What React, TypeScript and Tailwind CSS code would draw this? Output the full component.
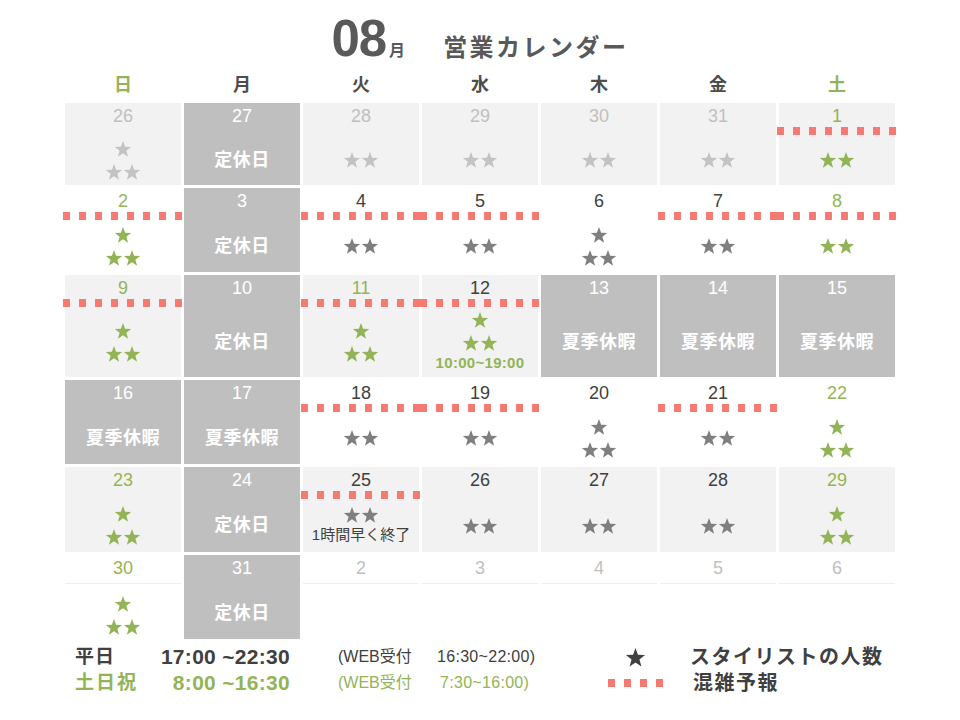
import React from 'react';

type Tone = 'muted' | 'dark' | 'green';

interface Day {
  n: string;
  num: Tone;
  bg: 'light' | 'white';
  dots?: boolean;
  stars?: 0 | 2 | 3;
  star?: 'light' | 'dark' | 'green';
  label?: string; // closed day
  note?: string;
  noteGreen?: boolean;
  line?: boolean;
}

const weekHeights = ['h-[82px]', 'h-[84px]', 'h-[102px]', 'h-[84px]', 'h-[85px]', 'h-[84px]'];

const numColor: Record<Tone, string> = {
  muted: 'text-[#c0c0c0]',
  dark: 'text-[#404040]',
  green: 'text-[#92b456]',
};

const starColor = {
  light: 'text-[#c3c3c3]',
  dark: 'text-[#7f7f7f]',
  green: 'text-[#92b456]',
};

const closed = (n: string, label = '定休日'): Day => ({ n, num: 'dark', bg: 'white', label });

const weeks: Day[][] = [
  [
    { n: '26', num: 'muted', bg: 'light', stars: 3, star: 'light' },
    closed('27'),
    { n: '28', num: 'muted', bg: 'light', stars: 2, star: 'light' },
    { n: '29', num: 'muted', bg: 'light', stars: 2, star: 'light' },
    { n: '30', num: 'muted', bg: 'light', stars: 2, star: 'light' },
    { n: '31', num: 'muted', bg: 'light', stars: 2, star: 'light' },
    { n: '1', num: 'green', bg: 'light', dots: true, stars: 2, star: 'green' },
  ],
  [
    { n: '2', num: 'green', bg: 'white', dots: true, stars: 3, star: 'green' },
    closed('3'),
    { n: '4', num: 'dark', bg: 'white', dots: true, stars: 2, star: 'dark' },
    { n: '5', num: 'dark', bg: 'white', dots: true, stars: 2, star: 'dark' },
    { n: '6', num: 'dark', bg: 'white', stars: 3, star: 'dark' },
    { n: '7', num: 'dark', bg: 'white', dots: true, stars: 2, star: 'dark' },
    { n: '8', num: 'green', bg: 'white', dots: true, stars: 2, star: 'green' },
  ],
  [
    { n: '9', num: 'green', bg: 'light', dots: true, stars: 3, star: 'green' },
    closed('10'),
    { n: '11', num: 'green', bg: 'light', dots: true, stars: 3, star: 'green' },
    { n: '12', num: 'dark', bg: 'light', dots: true, stars: 3, star: 'green', note: '10:00~19:00', noteGreen: true },
    closed('13', '夏季休暇'),
    closed('14', '夏季休暇'),
    closed('15', '夏季休暇'),
  ],
  [
    closed('16', '夏季休暇'),
    closed('17', '夏季休暇'),
    { n: '18', num: 'dark', bg: 'white', dots: true, stars: 2, star: 'dark' },
    { n: '19', num: 'dark', bg: 'white', dots: true, stars: 2, star: 'dark' },
    { n: '20', num: 'dark', bg: 'white', stars: 3, star: 'dark' },
    { n: '21', num: 'dark', bg: 'white', dots: true, stars: 2, star: 'dark' },
    { n: '22', num: 'green', bg: 'white', stars: 3, star: 'green' },
  ],
  [
    { n: '23', num: 'green', bg: 'light', stars: 3, star: 'green' },
    closed('24'),
    { n: '25', num: 'dark', bg: 'light', dots: true, stars: 2, star: 'dark', note: '1時間早く終了' },
    { n: '26', num: 'dark', bg: 'light', stars: 2, star: 'dark' },
    { n: '27', num: 'dark', bg: 'light', stars: 2, star: 'dark' },
    { n: '28', num: 'dark', bg: 'light', stars: 2, star: 'dark' },
    { n: '29', num: 'green', bg: 'light', stars: 3, star: 'green' },
  ],
  [
    { n: '30', num: 'green', bg: 'white', stars: 3, star: 'green', line: true },
    closed('31'),
    { n: '2', num: 'muted', bg: 'white', line: true },
    { n: '3', num: 'muted', bg: 'white', line: true },
    { n: '4', num: 'muted', bg: 'white', line: true },
    { n: '5', num: 'muted', bg: 'white', line: true },
    { n: '6', num: 'muted', bg: 'white', line: true },
  ],
];

const dotted = 'bg-[repeating-linear-gradient(90deg,#f57b72_0_7px,transparent_7px_16px)]';

function Star({ size = 18 }: { size?: number }) {
  return (
    <svg width={size} height={size} viewBox="0 0 24 24" fill="currentColor">
      <polygon points="12,1.2 14.8,8.9 22.9,9.2 16.5,14.3 18.8,22.2 12,17.6 5.2,22.2 7.5,14.3 1.1,9.2 9.2,8.9" />
    </svg>
  );
}

function Stars({ count, tone }: { count: number; tone: 'light' | 'dark' | 'green' }) {
  return (
    <div className={`flex flex-col items-center gap-[5px] ${starColor[tone]}`}>
      {count === 3 && <Star />}
      <div className="flex">
        <Star />
        <Star />
      </div>
    </div>
  );
}

function Cell({ d, h }: { d: Day; h: string }) {
  if (d.label) {
    return (
      <div className={`${h} flex flex-col bg-[#bfbfbf] text-white`}>
        <div className="h-[24px] pt-[3px] text-center text-[18px] leading-[21px]">{d.n}</div>
        <div className="h-2" />
        <div className="flex flex-1 items-center justify-center text-[18px] font-bold tracking-[0.5px]">{d.label}</div>
      </div>
    );
  }
  return (
    <div className={`${h} flex flex-col ${d.bg === 'light' ? 'bg-[#f2f2f2]' : 'bg-white'}`}>
      <div className={`h-[24px] pt-[3px] text-center text-[18px] leading-[21px] ${numColor[d.num]}`}>{d.n}</div>
      {d.dots ? (
        <div className={`-mx-[2px] h-2 ${dotted}`} />
      ) : (
        <div className={`h-2 ${d.line ? 'border-t border-[#eeeeee] mt-[4px]' : ''}`} />
      )}
      <div className="flex flex-1 flex-col items-center justify-center">
        {d.stars ? <Stars count={d.stars} tone={d.star ?? 'dark'} /> : null}
        {d.note && (
          <div
            className={
              d.noteGreen
                ? 'mt-[1px] text-[15px] font-bold leading-[20px] tracking-[0.3px] text-[#92b456]'
                : 'mt-[1px] text-[15px] leading-[20px] text-[#404040]'
            }
          >
            {d.note}
          </div>
        )}
      </div>
    </div>
  );
}

const dayNames = [
  { t: '日', c: 'text-[#92b456]' },
  { t: '月', c: 'text-[#4d4d4d]' },
  { t: '火', c: 'text-[#4d4d4d]' },
  { t: '水', c: 'text-[#4d4d4d]' },
  { t: '木', c: 'text-[#4d4d4d]' },
  { t: '金', c: 'text-[#4d4d4d]' },
  { t: '土', c: 'text-[#92b456]' },
];

export default function App() {
  return (
    <div className="h-[720px] w-[960px] overflow-hidden bg-white font-['Liberation_Sans','Noto_Sans_CJK_JP',sans-serif]">
      {/* Title */}
      <div className="flex h-[60px] items-baseline justify-center pt-[13px] text-[#595959]">
        <span className="text-[51px] font-bold leading-none tracking-[-1px]">08</span>
        <span className="ml-[3px] text-[16px] font-bold">月</span>
        <span className="ml-[38px] text-[24px] font-bold tracking-[2.5px]">営業カレンダー</span>
      </div>

      {/* Weekday header */}
      <div className="ml-[65px] grid h-[43px] w-[830px] grid-cols-7 gap-x-[3px] pt-[8px]">
        {dayNames.map((d) => (
          <div key={d.t} className={`flex items-center justify-center text-[18px] font-bold ${d.c}`}>
            {d.t}
          </div>
        ))}
      </div>

      {/* Calendar grid */}
      <div className="ml-[65px] grid w-[830px] grid-cols-7 gap-[3px]">
        {weeks.map((w, wi) => w.map((d, di) => <Cell key={`${wi}-${di}`} d={d} h={weekHeights[wi]} />))}
      </div>

      {/* Footer */}
      <div className="ml-[75px] mt-[5px] flex">
        <div className="flex w-[525px] flex-col">
          <div className="flex h-[26px] items-center text-[#404040]">
            <span className="w-[85px] text-[19px] font-bold tracking-[1px]">平日</span>
            <span className="w-[130px] text-right text-[21px] font-bold tracking-[0.3px]">17:00 ~22:30</span>
            <span className="ml-[48px] w-[99px] text-[16px]">(WEB受付</span>
            <span className="text-[16px] tracking-[0.3px]">16:30~22:00)</span>
          </div>
          <div className="flex h-[26px] items-center text-[#92b456]">
            <span className="w-[85px] text-[19px] font-bold tracking-[2px]">土日祝</span>
            <span className="w-[130px] text-right text-[21px] font-bold tracking-[0.3px]">8:00 ~16:30</span>
            <span className="ml-[48px] w-[102px] text-[16px]">(WEB受付</span>
            <span className="text-[16px] tracking-[0.3px]">7:30~16:00)</span>
          </div>
        </div>
        <div className="flex flex-col">
          <div className="flex h-[26px] items-center">
            <span className="flex w-[70px] justify-center text-[#404040]">
              <Star size={21} />
            </span>
            <span className="ml-[20px] text-[20px] font-bold tracking-[1.5px] text-[#404040]">スタイリストの人数</span>
          </div>
          <div className="flex h-[26px] items-center">
            <span className="flex w-[70px] justify-center">
              <span className={`block h-2 w-[55px] ${dotted}`} />
            </span>
            <span className="ml-[23px] text-[20px] font-bold tracking-[1.5px] text-[#404040]">混雑予報</span>
          </div>
        </div>
      </div>
    </div>
  );
}
